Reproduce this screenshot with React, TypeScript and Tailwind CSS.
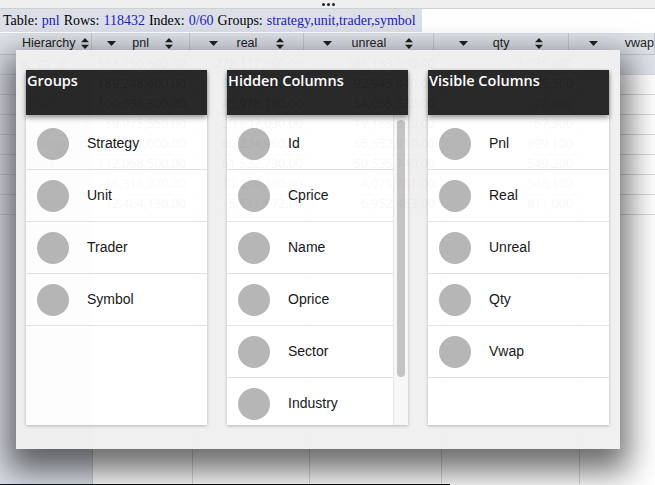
import { Fragment } from "react";

type Row = {
	name: string;
	pnl: string;
	real: string;
	unreal: string;
	qty: string;
};

const rows: Row[] = [
	{ name: "", pnl: "563,250,600.00", real: "278,117,000.00", unreal: "285,133,500.00", qty: "2,035,800" },
	{ name: "arbitrage", pnl: "189,246,400.00", real: "96,301,350.00", unreal: "92,945,040.00", qty: "325,300" },
	{ name: "chart", pnl: "100,034,300.00", real: "45,978,790.00", unreal: "54,055,520.00", qty: "-70,000" },
	{ name: "distressed", pnl: "39,975,550.00", real: "20,807,030.00", unreal: "19,168,530.00", qty: "67,300" },
	{ name: "mergerarb", pnl: "125,777,000.00", real: "60,224,960.00", unreal: "65,552,010.00", qty: "899,100" },
	{ name: "other", pnl: "112,068,500.00", real: "61,532,730.00", unreal: "50,535,740.00", qty: "549,200" },
	{ name: "pairs", pnl: "-16,315,270.00", real: "-12,239,490.00", unreal: "-4,075,781.00", qty: "-546,100" },
	{ name: "statarb", pnl: "12,464,130.00", real: "5,511,672.00", unreal: "6,952,463.00", qty: "811,000" },
];

const groups = ["Strategy", "Unit", "Trader", "Symbol"];
const hidden = ["Id", "Cprice", "Name", "Oprice", "Sector", "Industry"];
const visible = ["Pnl", "Real", "Unreal", "Qty", "Vwap"];

const SortIcon = () => (
	<svg width="8" height="11" viewBox="0 0 8 11">
		<path d="M4 0 L8 4.2 H0 Z" fill="#222" />
		<path d="M4 11 L8 6.8 H0 Z" fill="#222" />
	</svg>
);

const DropIcon = () => (
	<svg width="9" height="5" viewBox="0 0 9 5">
		<path d="M0 0 H9 L4.5 5 Z" fill="#222" />
	</svg>
);

const HeaderCell = ({ label, width, last }: { label: string; width: string; last?: boolean }) => (
	<div className={`${width} flex items-center border-r border-[#c4c8d0] ${last ? "justify-start gap-[27px] pl-[20px]" : "justify-evenly"}`}>
		<DropIcon />
		<span>{label}</span>
		{!last && <SortIcon />}
	</div>
);

const numClass = (v: string) => (v.startsWith("-") ? "text-[#e02020]" : "text-[#333]");

const ListPanel = ({ title, items, scroll }: { title: string; items: string[]; scroll?: boolean }) => (
	<div className="w-[181px] h-[355px] bg-white flex flex-col shadow-[0_1px_3px_rgba(0,0,0,0.25)]">
		<div className="relative z-10 h-[45px] shrink-0 bg-[#222] text-white text-[14.5px] leading-[20px] font-semibold pl-[1px] pt-[1px] shadow-[0_3px_5px_rgba(0,0,0,0.4)] font-['Open_Sans',sans-serif]">
			{title}
		</div>
		<div className="flex flex-1 min-h-0">
			<div className="flex-1 overflow-hidden pt-[3px]">
				{items.map((item) => (
					<div key={item} className="h-[52px] flex items-center border-b border-[#e0e0e0]">
						<div className="ml-[11px] w-[32px] h-[32px] rounded-full bg-[#b4b4b4]" />
						<span className="ml-[18px] text-[14px] text-[#111] font-['Liberation_Sans',Arial,sans-serif]">{item}</span>
					</div>
				))}
			</div>
			{scroll && (
				<div className="w-[15px] shrink-0 bg-[#f7f7f7] border-l border-[#e6e6e6] pt-[5px] pl-[3px]">
					<div className="w-[8px] h-[257px] rounded-full bg-[#c2c2c2]" />
				</div>
			)}
		</div>
	</div>
);

export default function App() {
	return (
		<div className="relative w-[655px] h-[485px] overflow-hidden bg-white flex flex-col">
			{/* top strip */}
			<div className="h-[9px] shrink-0 bg-[#efefef] border-b border-[#cfcfcf] flex items-center justify-center gap-[2px] pl-[2px]">
				<span className="w-[3px] h-[3px] rounded-full bg-[#222]" />
				<span className="w-[3px] h-[3px] rounded-full bg-[#222]" />
				<span className="w-[3px] h-[3px] rounded-full bg-[#222]" />
			</div>

			{/* info row */}
			<div className="h-[23px] shrink-0 flex font-['Liberation_Serif','Times_New_Roman',serif] text-[14px]">
				<div className="bg-[#dde0e9] pl-[3px] pr-[6px] flex items-center gap-[4px] text-black">
					<span>Table:</span>
					<span className="text-[#2020c0]">pnl</span>
					<span>Rows:</span>
					<span className="text-[#2020c0]">118432</span>
					<span>Index:</span>
					<span className="text-[#2020c0]">0/60</span>
					<span>Groups:</span>
					<span className="text-[#2020c0]">strategy,unit,trader,symbol</span>
				</div>
			</div>

			{/* table */}
			<div className="flex-1 flex flex-col min-h-0 mt-[1px] font-['Liberation_Sans',Arial,sans-serif]">
				<div className="h-[22px] shrink-0 flex bg-[#dfe3ea] text-[12.5px] text-[#222] border-b border-[#c4c8d0]">
					<div className="w-[93px] flex items-center pl-[22px] gap-[5px] border-r border-[#c4c8d0]">
						<span>Hierarchy</span>
						<SortIcon />
					</div>
					<HeaderCell label="pnl" width="w-[100px]" />
					<HeaderCell label="real" width="w-[117px]" />
					<HeaderCell label="unreal" width="w-[132px]" />
					<HeaderCell label="qty" width="w-[138px]" />
					<HeaderCell label="vwap" width="flex-1" last />
				</div>

				<div className="flex-1 min-h-0 grid grid-cols-[93px_100px_117px_132px_138px_1fr] grid-rows-[repeat(8,20px)_1fr] font-['Open_Sans',sans-serif] text-[12.5px]">
					{rows.map((r, i) => (
						<Fragment key={i}>
							<div className={`flex items-center border-b border-r border-[#c8ccd4] bg-[#dde1e9] text-[#888]`}>
								{i === 0 ? (
									<div className="flex items-center gap-[8px] pl-[20px]">
										<span className="w-[10px] h-[10px] rounded-sm bg-[#999]" />
										<span className="w-[12px] h-[12px] rounded-full border-2 border-[#e33]" />
										<span className="w-[10px] h-[10px] rounded-sm bg-[#6b6]" />
									</div>
								) : (
									<div className="flex items-center gap-[5px] pl-[20px]">
										<span className="text-[8px]">▸</span>
										<span>{r.name}</span>
									</div>
								)}
							</div>
							{[r.pnl, r.real, r.unreal, r.qty].map((v, j) => (
								<div
									key={j}
									className={`flex items-center justify-end pr-[6px] border-b border-r border-[#dadada] ${i === 0 ? "bg-[#dfe3ea]" : ""} ${numClass(v)}`}
								>
									{v}
								</div>
							))}
							<div className={`border-b border-[#dadada] ${i === 0 ? "bg-[#dfe3ea]" : ""}`} />
						</Fragment>
					))}
					<div className="bg-[#dde1e9] border-r border-[#c8ccd4]" />
					<div className="border-r border-[#dadada]" />
					<div className="border-r border-[#dadada]" />
					<div className="border-r border-[#dadada]" />
					<div className="border-r border-[#dadada]" />
					<div />
				</div>
				<div className="h-[1px] w-[450px] bg-[#111] shrink-0" />
			</div>

			{/* column chooser dialog */}
			<div className="absolute left-[16px] top-[50px] w-[604px] h-[399px] bg-[#f0f0f0] opacity-[0.965] shadow-[0_14px_30px_8px_rgba(0,0,0,0.6)] pl-[10px] pt-[20px] flex gap-[20px]">
				<ListPanel title="Groups" items={groups} />
				<ListPanel title="Hidden Columns" items={hidden} scroll />
				<ListPanel title="Visible Columns" items={visible} />
			</div>
		</div>
	);
}
